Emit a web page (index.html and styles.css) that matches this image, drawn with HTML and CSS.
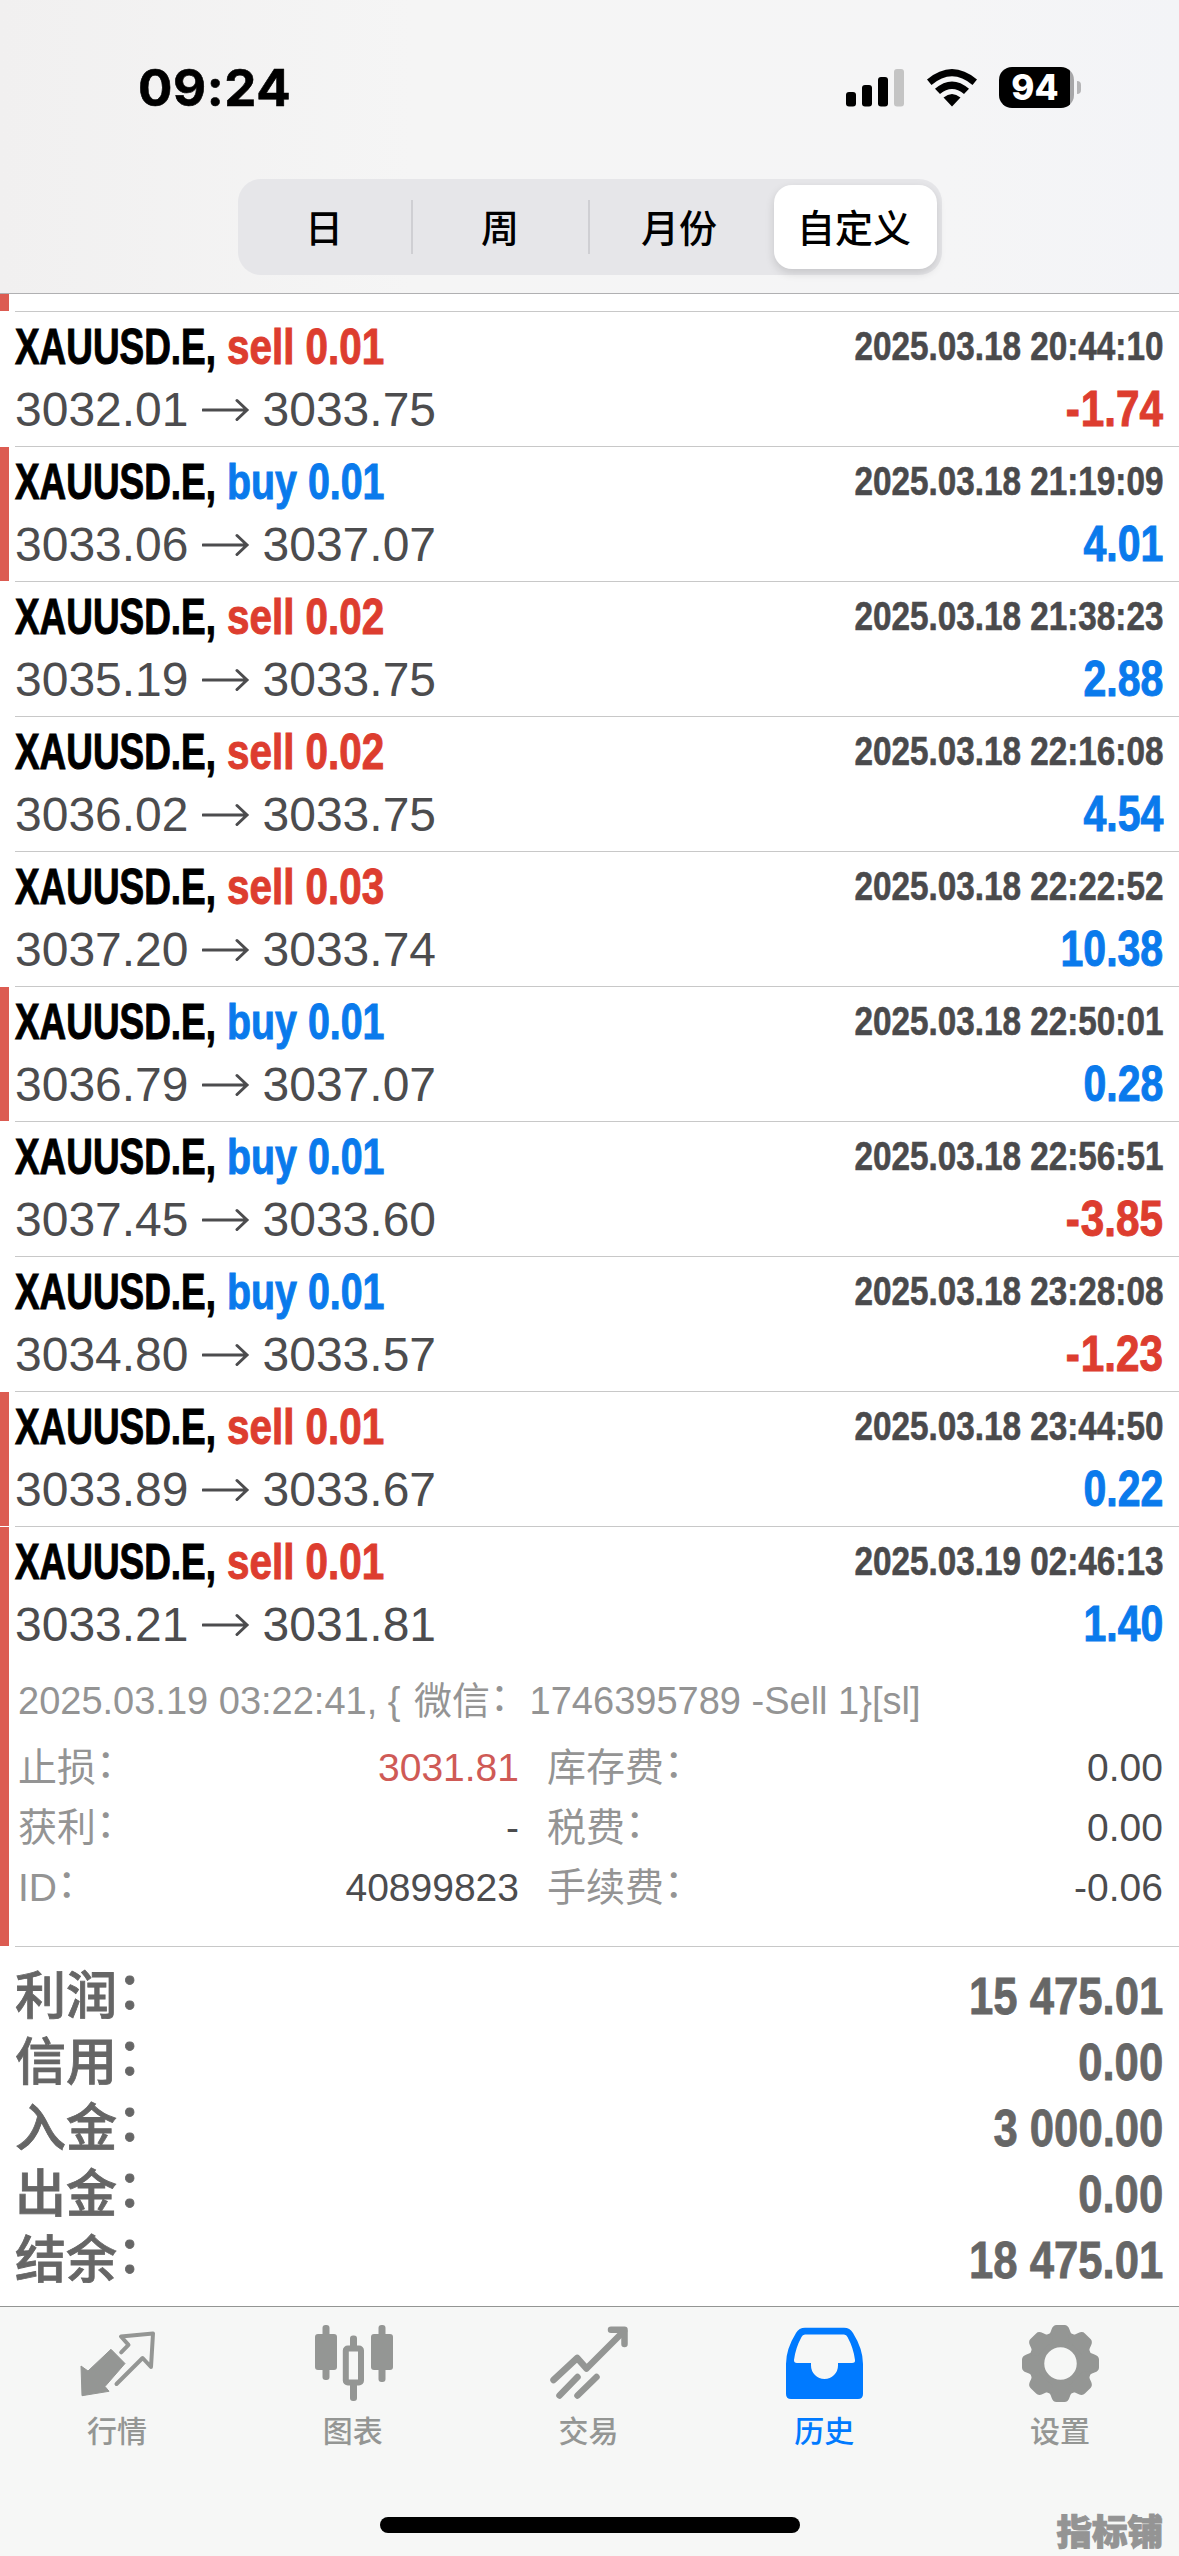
FILE: index.html
```html
<!DOCTYPE html>
<html lang="zh-CN">
<head>
<meta charset="utf-8">
<title>历史</title>
<link rel="stylesheet" href="styles.css">
</head>
<body>
<div class="screen">
  <header class="header">
    <div class="status">
      <span class="clock">09:24</span>
      <div class="status-icons">
        <svg class="signal" width="58" height="38" viewBox="0 0 58 38"><rect x="0" y="23" width="10" height="14.5" rx="3"/><rect x="16" y="16" width="10" height="21.5" rx="3"/><rect x="32" y="8" width="10" height="29.5" rx="3"/><rect x="48" y="0" width="10" height="37.5" rx="3" fill="#c4c4c4"/></svg>
        <svg class="wifi" width="52" height="38" viewBox="0 0 52 38"><path d="M1 10.5Q26-10.5 51 10.5L46.500 16Q26-1.500 5.500 16Z"/><path d="M9 19.800Q26 5 43 19.800L38 25Q26 14.800 14 25Z"/><path d="M17.500 28.500Q26 21.500 34.500 28.500L26 37.500Z"/></svg>
        <div class="battery"><span class="level"><span class="level-text">94</span></span><i class="cap"></i></div>
      </div>
    </div>
    <nav class="segments">
      <span class="segment">日</span><span class="segment">周</span><span class="segment">月份</span><span class="segment selected">自定义</span>
    </nav>
  </header>

  <main class="history">
    <div class="deal partial marked"></div>
    <div id="deals"></div>
    <section class="detail marked">
      <p class="comment">2025.03.19 03:22:41, {<span class="app"> 微信<i class="colon">：</i></span> 1746395789 -Sell 1}[sl]</p>
      <div class="fields">
        <span>止损<i class="colon">：</i></span><b class="stop">3031.81</b><span class="second">库存费<i class="colon">：</i></span><b>0.00</b>
        <span>获利<i class="colon">：</i></span><b>-</b><span class="second">税费<i class="colon">：</i></span><b>0.00</b>
        <span>ID<i class="colon">：</i></span><b>40899823</b><span class="second">手续费<i class="colon">：</i></span><b>-0.06</b>
      </div>
    </section>
    <section class="totals">
      <div class="total"><span>利润<i class="colon">：</i></span><b>15 475.01</b></div>
      <div class="total"><span>信用<i class="colon">：</i></span><b>0.00</b></div>
      <div class="total"><span>入金<i class="colon">：</i></span><b>3 000.00</b></div>
      <div class="total"><span>出金<i class="colon">：</i></span><b>0.00</b></div>
      <div class="total"><span>结余<i class="colon">：</i></span><b>18 475.01</b></div>
    </section>
  </main>

  <footer class="footer">
    <nav class="tabs">
      <a class="tab"><svg viewBox="0 0 80 80"><path fill="currentColor" d="M3 44 10 49 33 27.300 47 41.500 27 64.500 31 69.300 4 73.700Z" stroke="currentColor" stroke-linejoin="round"/><path d="M43.200 30.300 50.500 22.800 43 14.500 75 11.500 73 45 64.600 36 38.500 62" fill="none" stroke="currentColor" stroke-width="4" stroke-linecap="round" stroke-linejoin="round"/></svg><span>行情</span></a>
      <a class="tab"><svg viewBox="0 0 80 80" fill="currentColor"><rect x="1" y="12" width="22" height="36" rx="3"/><rect x="8.500" y="3" width="7" height="55" rx="3"/><rect x="57" y="12" width="22" height="36" rx="3"/><rect x="64.500" y="3" width="7" height="57" rx="3"/><rect x="36" y="13.500" width="7" height="15" rx="3"/><rect x="36" y="59" width="7" height="20" rx="3"/><rect x="31.800" y="26.500" width="15.200" height="34" rx="2" fill="none" stroke="currentColor" stroke-width="6"/></svg><span>图表</span></a>
      <a class="tab"><svg viewBox="0 0 80 80" fill="none" stroke="currentColor" stroke-width="6.500" stroke-linecap="round" stroke-linejoin="round"><path d="M4.500 58 28.200 36 37.500 46.500 75 9"/><path d="M62 7.800H75.500V22"/><path d="M28.500 55 10.500 73.500M47.500 55 28.500 73.500"/></svg><span>交易</span></a>
      <a class="tab active"><svg viewBox="0 0 80 80"><path fill="currentColor" fill-rule="evenodd" d="M20 5.700H59Q65 5.700 68 11 78 27 78 42V72Q78 77 73 77H6Q1 77 1 72V42Q1 27 11 11 14 5.700 20 5.700ZM20 12.500Q17.500 12.500 16.500 15 10.500 26 9 38 8.800 41 12 41H26V43.500A13.500 13.500 0 0 0 53 43.500V41H67Q70.500 41 70 38 68.500 26 62.500 15 61.500 12.500 59 12.500Z"/></svg><span>历史</span></a>
      <a class="tab"><svg viewBox="0 0 80 80"><circle cx="39.500" cy="41.500" r="24" fill="none" stroke="currentColor" stroke-width="15.500"/><g fill="currentColor"><path id="tooth" d="M25 15Q29 13 30.500 7.500 32 3 35.500 3H43.500Q47 3 48.500 7.500 50 13 54 15L50 20H29Z"/><use href="#tooth" transform="rotate(45 39.500 41.500)"/><use href="#tooth" transform="rotate(90 39.500 41.500)"/><use href="#tooth" transform="rotate(135 39.500 41.500)"/><use href="#tooth" transform="rotate(180 39.500 41.500)"/><use href="#tooth" transform="rotate(225 39.500 41.500)"/><use href="#tooth" transform="rotate(270 39.500 41.500)"/><use href="#tooth" transform="rotate(315 39.500 41.500)"/></g></svg><span>设置</span></a>
    </nav>
    <div class="home-indicator"></div>
    <span class="watermark">指标铺</span>
  </footer>
</div>
<script src="deals.js"></script>
</body>
</html>
```

FILE: deals.js
```js
// open price, close price, side, volume, time, profit, marked
const deals = [
  ["3032.01", "3033.75", "sell", "0.01", "2025.03.18 20:44:10", "-1.74", false],
  ["3033.06", "3037.07", "buy", "0.01", "2025.03.18 21:19:09", "4.01", true],
  ["3035.19", "3033.75", "sell", "0.02", "2025.03.18 21:38:23", "2.88", false],
  ["3036.02", "3033.75", "sell", "0.02", "2025.03.18 22:16:08", "4.54", false],
  ["3037.20", "3033.74", "sell", "0.03", "2025.03.18 22:22:52", "10.38", false],
  ["3036.79", "3037.07", "buy", "0.01", "2025.03.18 22:50:01", "0.28", true],
  ["3037.45", "3033.60", "buy", "0.01", "2025.03.18 22:56:51", "-3.85", false],
  ["3034.80", "3033.57", "buy", "0.01", "2025.03.18 23:28:08", "-1.23", false],
  ["3033.89", "3033.67", "sell", "0.01", "2025.03.18 23:44:50", "0.22", true],
  ["3033.21", "3031.81", "sell", "0.01", "2025.03.19 02:46:13", "1.40", true]
];
document.getElementById("deals").innerHTML = deals.map(([open, close, side, volume, time, profit, marked]) => `
  <article class="deal${marked ? " marked" : ""}">
    <div class="line title">
      <span class="symbol">XAUUSD.E,</span>
      <span class="side ${side}">${side} ${volume}</span>
      <time class="time">${time}</time>
    </div>
    <div class="line prices">
      <span class="price">${open}</span>
      <svg class="arrow" width="48" height="24" viewBox="0 0 48 24"><path d="M1 12H44M35 2.500 45 12 35 21.500"/></svg>
      <span class="price">${close}</span>
      <span class="profit ${profit.startsWith("-") ? "loss" : "gain"}">${profit}</span>
    </div>
  </article>`).join("");
```

FILE: styles.css
```css
* { box-sizing: border-box; }
body { margin: 0; background: #fff; font-family: "Liberation Sans", "Noto Sans CJK SC", sans-serif; }
.screen { width: 1179px; height: 2556px; overflow: hidden; display: flex; flex-direction: column; }

/* header */
.header { height: 294px; border-bottom: 1px solid #b0b0b2; background: linear-gradient(90deg, #f1f0f0, #f5f5f5 35%, #f5f5f6 80%, #f3f4f7); }
.status { height: 179px; padding: 0 98px 0 138px; display: flex; justify-content: space-between; align-items: flex-start; }
.clock { margin-top: 57px; font: 700 51px/62px Inter, sans-serif; letter-spacing: 0.6px; -webkit-text-stroke: 0.6px; }
.status-icons { display: flex; align-items: flex-start; padding-top: 67px; }
.signal { margin: 2px 22px 0 0; }
.wifi { margin: 2px 21px 0 0; }
.battery { display: flex; align-items: center; gap: 3px; }
.level { width: 75px; height: 41px; border-radius: 13px; background: linear-gradient(90deg, #000 71px, #a6a6a8 71px); color: #fff; display: flex; justify-content: center; }
.level-text { font: 800 35px/41px Inter, sans-serif; margin-right: 3px; }
.cap { width: 4px; height: 13px; border-radius: 0 5px 5px 0; background: #b5b5b7; }
.segments { width: 704px; height: 96px; margin-left: 238px; padding: 6px 5px 6px 0; border-radius: 23px; background: #e6e6e9; display: grid; grid-template-columns: 175px 177px 184px 163px; }
.segment { display: flex; align-items: center; justify-content: center; padding: 0 3px 3px 0; font: 500 38px/60px "Noto Sans CJK SC", sans-serif; background: linear-gradient(#cfcfd3, #cfcfd3) right center / 2px 54px no-repeat; }
.segment:nth-child(3) { background: none; padding-right: 6px; }
.segment.selected { background: #fff; border-radius: 18px; box-shadow: 0 4px 10px rgba(0, 0, 0, .14); }

/* deal rows */
.history { height: 2012px; }
.deal { height: 135px; padding: 0 16px 0 15px; background: linear-gradient(#c8c8c8, #c8c8c8) 15px bottom / 100% 1px no-repeat; }
.deal:last-child { background: none; }
.partial { height: 18px; }
.marked { position: relative; }
.marked::before { content: ""; position: absolute; left: 0; top: 0; bottom: 1px; width: 9px; background: #dc5c52; }
.deal.marked:last-child::before { bottom: 0; }
.line { display: flex; align-items: baseline; white-space: nowrap; }
.title { height: 66px; padding-top: 6px; font-weight: 700; font-size: 50px; line-height: 58px; -webkit-text-stroke: 1px; }
.symbol { width: 211.5px; transform: scaleX(.738); transform-origin: left; }
.side { transform: scaleX(.808); transform-origin: left; }
.side.buy { transform: scaleX(.787); }
.sell, .loss { color: #dd3d2f; }
.buy, .gain { color: #0a7aec; }
.time { margin-left: auto; font-size: 40px; color: #4a4a4c; transform: scaleX(.832); transform-origin: right; position: relative; top: -4px; -webkit-text-stroke: 0.6px; }
.prices { height: 68px; padding-top: 1px; font-size: 48px; line-height: 60px; color: #4c4c4e; }
.arrow { width: 48px; margin: 19px 13px 0; align-self: flex-start; fill: none; stroke: #4c4c4e; stroke-width: 3; stroke-linecap: round; }
.profit { margin-left: auto; font-size: 50px; font-weight: 700; transform: scaleX(.82); transform-origin: right; -webkit-text-stroke: 1px; }
.profit.loss { transform: scaleX(.845); }
.profit.loss::first-letter { letter-spacing: 1px; }
.colon { font-style: normal; position: relative; }

/* expanded deal */
.detail { height: 285px; padding: 8px 16px 0 18px; background: linear-gradient(#c8c8c8, #c8c8c8) 15px bottom / 100% 1px no-repeat; }
.comment { margin: 0; font-size: 38px; line-height: 62px; color: #949494; white-space: nowrap; }
.comment .app { margin-left: 3px; }
.comment .colon { letter-spacing: -9px; }
.detail .colon { top: -4px; }
.fields { margin-top: 6px; display: grid; grid-template-columns: 150px 351px 160px 1fr; grid-auto-rows: 60px; font-size: 39px; line-height: 60px; color: #949494; white-space: nowrap; }
.fields b { font-weight: 400; color: #4c4c4e; text-align: right; }
.fields b.stop { color: #cf5a56; }
.fields .second { padding-left: 28px; }

/* totals */
.totals { padding: 16px 16px 0 15px; color: #666; }
.total { height: 66px; display: flex; justify-content: space-between; align-items: baseline; font-weight: 700; font-size: 51px; line-height: 66px; }
.total span { font-weight: 500; -webkit-text-stroke: 0.8px; }
.total .colon { top: -5px; }
.total b { font-size: 52px; transform: scaleX(.84); transform-origin: right; -webkit-text-stroke: 0.8px; }

/* tab bar */
.footer { position: relative; height: 250px; border-top: 1px solid #939593; background: #f6f7f6; }
.tabs { display: grid; grid-template-columns: repeat(5, 1fr); height: 210px; padding-top: 15px; }
.tab { display: flex; flex-direction: column; align-items: center; color: #949694; font: 500 30px/40px "Noto Sans CJK SC", sans-serif; }
.tab svg { width: 80px; height: 80px; margin-bottom: 7px; }
.tab span { margin-right: 2px; }
.tab.active { color: #007aff; }
.home-indicator { width: 420px; height: 16px; border-radius: 8px; background: #000; margin: 0 auto; }
.watermark { position: absolute; right: 16px; bottom: 1px; font: 900 35.500px/50px "Noto Sans CJK SC", sans-serif; color: #949494; -webkit-text-stroke: 1px; }
```
